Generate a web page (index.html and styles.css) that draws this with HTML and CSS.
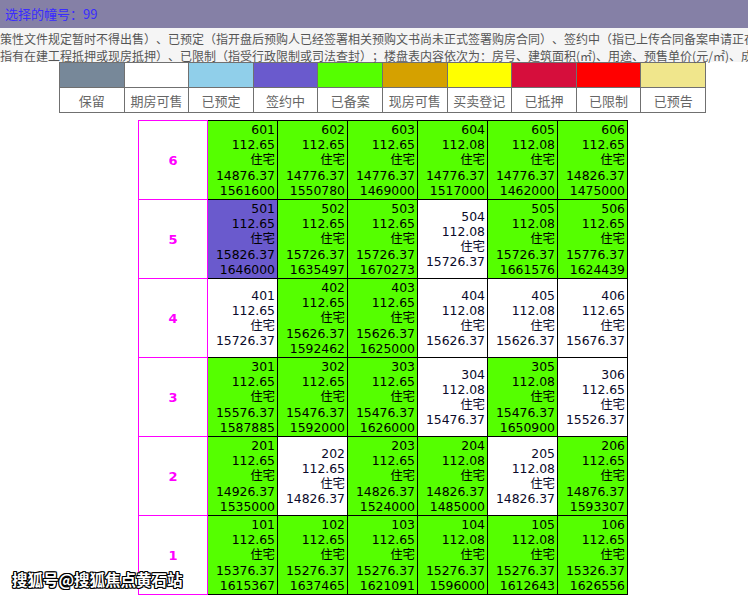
FILE: index.html
```html
<!DOCTYPE html>
<html lang="zh">
<head>
<meta charset="utf-8">
<title>楼盘表</title>
<link rel="stylesheet" href="styles.css">
</head>
<body>
<div class="topbar">选择的幢号：99</div>
<div class="notes">
  <div class="note-line">策性文件规定暂时不得出售）、已预定（指开盘后预购人已经签署相关预购文书尚未正式签署购房合同）、签约中（指已上传合同备案申请正在</div>
  <div class="note-line">指有在建工程抵押或现房抵押）、已限制（指受行政限制或司法查封）；楼盘表内容依次为：房号、建筑面积(㎡)、用途、预售单价(元/㎡)、成</div>
</div>
<table class="legend">
  <tr class="swatches">
    <td class="c-keep"></td><td class="c-avail"></td><td class="c-booked"></td><td class="c-signing"></td><td class="c-filed"></td>
    <td class="c-spot"></td><td class="c-reg"></td><td class="c-mortg"></td><td class="c-limit"></td><td class="c-notice"></td>
  </tr>
  <tr class="labels">
    <td>保留</td><td>期房可售</td><td>已预定</td><td>签约中</td><td>已备案</td>
    <td>现房可售</td><td>买卖登记</td><td>已抵押</td><td>已限制</td><td>已预告</td>
  </tr>
</table>
<table class="building">
  <tr>
    <td class="floor">6</td>
    <td class="u c-filed">601<br>112.65<br>住宅<br>14876.37<br>1561600</td>
    <td class="u c-filed">602<br>112.65<br>住宅<br>14776.37<br>1550780</td>
    <td class="u c-filed">603<br>112.65<br>住宅<br>14776.37<br>1469000</td>
    <td class="u c-filed">604<br>112.08<br>住宅<br>14776.37<br>1517000</td>
    <td class="u c-filed">605<br>112.08<br>住宅<br>14776.37<br>1462000</td>
    <td class="u c-filed">606<br>112.65<br>住宅<br>14826.37<br>1475000</td>
  </tr>
  <tr>
    <td class="floor">5</td>
    <td class="u c-signing">501<br>112.65<br>住宅<br>15826.37<br>1646000</td>
    <td class="u c-filed">502<br>112.65<br>住宅<br>15726.37<br>1635497</td>
    <td class="u c-filed">503<br>112.65<br>住宅<br>15726.37<br>1670273</td>
    <td class="u free">504<br>112.08<br>住宅<br>15726.37</td>
    <td class="u c-filed">505<br>112.08<br>住宅<br>15726.37<br>1661576</td>
    <td class="u c-filed">506<br>112.65<br>住宅<br>15776.37<br>1624439</td>
  </tr>
  <tr>
    <td class="floor">4</td>
    <td class="u free">401<br>112.65<br>住宅<br>15726.37</td>
    <td class="u c-filed">402<br>112.65<br>住宅<br>15626.37<br>1592462</td>
    <td class="u c-filed">403<br>112.65<br>住宅<br>15626.37<br>1625000</td>
    <td class="u free">404<br>112.08<br>住宅<br>15626.37</td>
    <td class="u free">405<br>112.08<br>住宅<br>15626.37</td>
    <td class="u free">406<br>112.65<br>住宅<br>15676.37</td>
  </tr>
  <tr>
    <td class="floor">3</td>
    <td class="u c-filed">301<br>112.65<br>住宅<br>15576.37<br>1587885</td>
    <td class="u c-filed">302<br>112.65<br>住宅<br>15476.37<br>1592000</td>
    <td class="u c-filed">303<br>112.65<br>住宅<br>15476.37<br>1626000</td>
    <td class="u free">304<br>112.08<br>住宅<br>15476.37</td>
    <td class="u c-filed">305<br>112.08<br>住宅<br>15476.37<br>1650900</td>
    <td class="u free">306<br>112.65<br>住宅<br>15526.37</td>
  </tr>
  <tr>
    <td class="floor">2</td>
    <td class="u c-filed">201<br>112.65<br>住宅<br>14926.37<br>1535000</td>
    <td class="u free">202<br>112.65<br>住宅<br>14826.37</td>
    <td class="u c-filed">203<br>112.65<br>住宅<br>14826.37<br>1524000</td>
    <td class="u c-filed">204<br>112.08<br>住宅<br>14826.37<br>1485000</td>
    <td class="u free">205<br>112.08<br>住宅<br>14826.37</td>
    <td class="u c-filed">206<br>112.65<br>住宅<br>14876.37<br>1593307</td>
  </tr>
  <tr>
    <td class="floor">1</td>
    <td class="u c-filed">101<br>112.65<br>住宅<br>15376.37<br>1615367</td>
    <td class="u c-filed">102<br>112.65<br>住宅<br>15276.37<br>1637465</td>
    <td class="u c-filed">103<br>112.65<br>住宅<br>15276.37<br>1621091</td>
    <td class="u c-filed">104<br>112.08<br>住宅<br>15276.37<br>1596000</td>
    <td class="u c-filed">105<br>112.08<br>住宅<br>15276.37<br>1612643</td>
    <td class="u c-filed">106<br>112.65<br>住宅<br>15326.37<br>1626556</td>
  </tr>
</table>
<div class="watermark">搜狐号@搜狐焦点黄石站</div>
</body>
</html>
```
FILE: styles.css
```css
html, body {
  margin: 0;
  padding: 0;
  background: #fff;
  font-family: "DejaVu Sans", "Noto Sans CJK SC", sans-serif;
}
body {
  width: 748px;
  height: 597px;
  overflow: hidden;
  position: relative;
}
.topbar {
  height: 28px;
  line-height: 27px;
  background: #8580a6;
  color: #3a2cff;
  font-family: "Noto Sans CJK SC", sans-serif;
  font-size: 13px;
  text-spacing-trim: space-all;
  padding-left: 5px;
}
.notes {
  background: #f5f5f5;
  height: 32px;
  padding-top: 2px;
}
.note-line {
  white-space: nowrap;
  overflow: hidden;
  font-family: "Noto Sans CJK SC", sans-serif;
  font-size: 12px;
  line-height: 17px;
  text-spacing-trim: space-all;
  color: #555;
}
.legend {
  border-collapse: collapse;
  margin-left: 59px;
  width: 647px;
  table-layout: fixed;
}
.legend td {
  border: 1px solid #707070;
  padding: 0;
  text-align: center;
}
.swatches td { height: 24px; }
.labels td {
  height: 24px;
  font-family: "Noto Sans CJK SC", sans-serif;
  font-size: 13px;
  color: #666;
}
.c-keep { background: #778899; }
.c-avail { background: #ffffff; }
.c-booked { background: #90cfea; }
.c-signing { background: #6a5acd; }
.c-filed { background: #55ff00; }
.c-spot { background: #d5a100; }
.c-reg { background: #ffff00; }
.c-mortg { background: #d60e3c; }
.c-limit { background: #ff0000; }
.c-notice { background: #f0e68c; }

.building {
  border-collapse: collapse;
  margin-left: 138px;
  margin-top: 7px;
  table-layout: fixed;
}
.building td {
  padding: 0 2px 0 0;
  height: 78px;
  border: 1px solid #000;
}
.building .floor {
  width: 68px;
  border: 1px solid #ff00ff;
  text-align: center;
  color: #ff00ff;
  font-weight: bold;
  font-size: 13px;
  padding: 0;
}
.building .u {
  width: 67px;
  text-align: right;
  vertical-align: middle;
  font-size: 12.4px;
  line-height: 15.2px;
  color: #000;
  white-space: nowrap;
}
.building .free {
  background: #fff;
  color: #0a0a2a;
}
.watermark {
  position: absolute;
  left: 12px;
  top: 569px;
  font-family: "Noto Sans CJK SC", sans-serif;
  font-weight: bold;
  font-size: 15.5px;
  line-height: 20px;
  color: #fff;
  text-shadow: 1px 1px 0 #000, -1px -1px 0 #000, 1px -1px 0 #000, -1px 1px 0 #000, 1px 0 0 #000, -1px 0 0 #000, 0 1px 0 #000, 0 -1px 0 #000;
}
```
